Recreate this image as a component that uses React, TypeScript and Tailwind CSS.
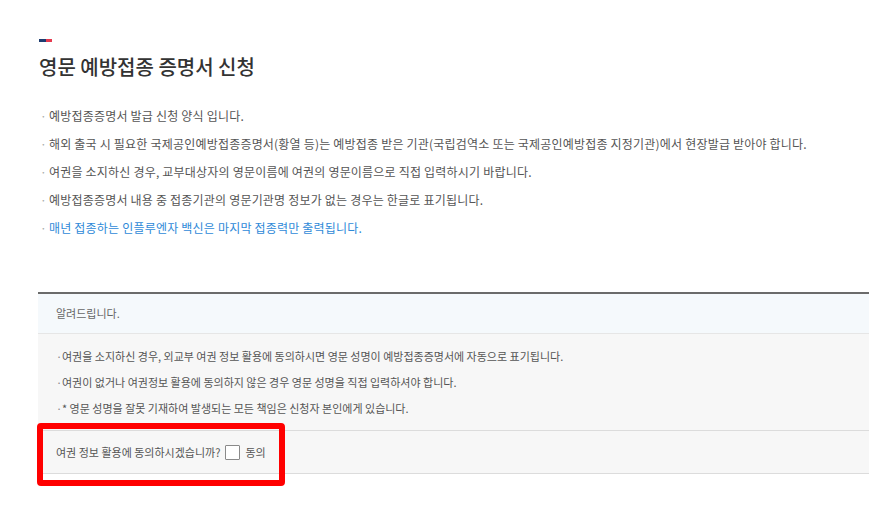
import React from "react";

const font = { fontFamily: '"Noto Sans CJK KR", "Noto Sans", sans-serif' };

const mainItems: { text: string; blue?: boolean }[] = [
  { text: "예방접종증명서 발급 신청 양식 입니다." },
  {
    text:
      "해외 출국 시 필요한 국제공인예방접종증명서(황열 등)는 예방접종 받은 기관(국립검역소 또는 국제공인예방접종 지정기관)에서 현장발급 받아야 합니다.",
  },
  { text: "여권을 소지하신 경우, 교부대상자의 영문이름에 여권의 영문이름으로 직접 입력하시기 바랍니다." },
  { text: "예방접종증명서 내용 중 접종기관의 영문기관명 정보가 없는 경우는 한글로 표기됩니다." },
  { text: "매년 접종하는 인플루엔자 백신은 마지막 접종력만 출력됩니다.", blue: true },
];

const noticeItems = [
  "여권을 소지하신 경우, 외교부 여권 정보 활용에 동의하시면 영문 성명이 예방접종증명서에 자동으로 표기됩니다.",
  "여권이 없거나 여권정보 활용에 동의하지 않은 경우 영문 성명을 직접 입력하셔야 합니다.",
  "* 영문 성명을 잘못 기재하여 발생되는 모든 책임은 신청자 본인에게 있습니다.",
];

export default function App() {
  return (
    <div className="relative w-[896px] h-[505px] bg-white overflow-hidden" style={font}>
      <div className="pt-[39px] pl-[38px] pr-[27px]">
        <div className="flex ml-[1px] h-[3px] w-[13px]">
          <div className="w-[7px] h-full bg-[#1d3c70]" />
          <div className="w-[6px] h-full bg-[#e63a4f]" />
        </div>
        <h1 className="mt-[11px] ml-[1px] text-[20px] leading-[28px] font-medium text-[#333]">
          영문 예방접종 증명서 신청
        </h1>
        <ul className="mt-[21px]">
          {mainItems.map((it, i) => (
            <li
              key={i}
              className={`flex items-center h-[28px] text-[12px] tracking-[0.2px] ${
                it.blue ? "text-[#2f8ad8]" : "text-[#555]"
              }`}
            >
              <span className="w-[9px] ml-[2px] text-[#aaa]">·</span>
              <span>{it.text}</span>
            </li>
          ))}
        </ul>

        <div className="mt-[50px] border-t-2 border-[#6b6b6b]">
          <div className="h-[40px] flex items-center pl-[18px] bg-[#f5f9fc] border-b border-[#e6e6e6] text-[11px] text-[#666]">
            알려드립니다.
          </div>
          <ul className="bg-[#f7f7f7] py-[9px] pl-[18px] border-b border-[#dcdcdc]">
            {noticeItems.map((t, i) => (
              <li key={i} className="flex items-center h-[26px] text-[11px] text-[#555]">
                <span className="w-[6px] text-[#888]">·</span>
                <span>{t}</span>
              </li>
            ))}
          </ul>
          <div className="h-[43px] flex items-center pl-[18px] bg-[#f7f7f7] border-b border-[#dcdcdc] text-[11px] text-[#555]">
            <span>여권 정보 활용에 동의하시겠습니까?</span>
            <label className="flex items-center ml-[5px]">
              <span className="w-[15px] h-[15px] border border-[#8a8a8a] bg-white rounded-[1px]" />
              <span className="ml-[5px]">동의</span>
            </label>
          </div>
        </div>
      </div>

      <div className="absolute left-[37px] top-[423px] w-[248px] h-[63px] border-[6px] border-[#ff0000] rounded-[4px] pointer-events-none" />
    </div>
  );
}
